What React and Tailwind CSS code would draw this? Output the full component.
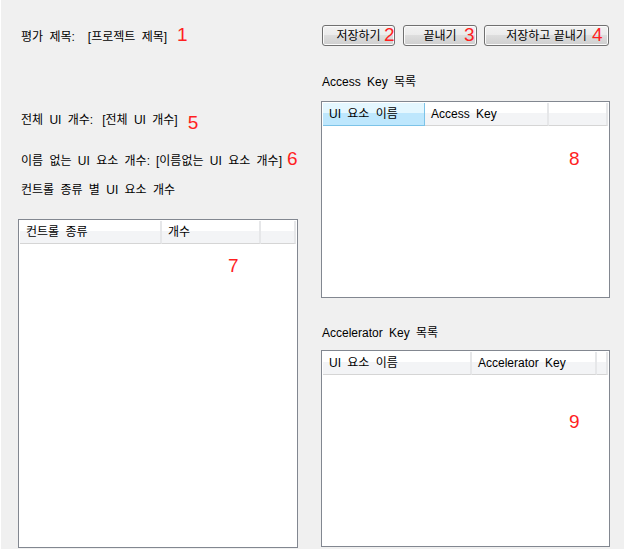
import React from "react"

const digit = "font-['Liberation_Sans',Arial,sans-serif] text-[19px] leading-none text-[#ff1f1f]"

const headCell =
  "flex h-[23px] items-center border-r-2 border-b border-r-[#e6e7e9] border-b-[#d5d5d5] bg-[linear-gradient(#ffffff_0%,#ffffff_45%,#f3f4f6_45%,#f3f4f6_100%)] pl-[6px]"
const hotCell =
  "flex h-[23px] items-center border-r border-b border-[#7cc3e8] bg-[linear-gradient(#e4f7ff_0%,#e4f7ff_45%,#bee7fd_45%,#bee7fd_100%)] pl-[6px]"

function ListBox({ className, columns, hot, mark, markPos }) {
  return (
    <div className={`relative border border-[#828790] bg-white p-px ${className}`}>
      <div className="flex">
        {columns.map((c, i) => (
          <div key={i} className={`${i === hot ? hotCell : headCell} ${c.w}`}>
            {c.label}
          </div>
        ))}
      </div>
      <span className={`absolute ${digit} ${markPos}`}>{mark}</span>
    </div>
  )
}

function Button({ label, mark, className, markPos }) {
  return (
    <button
      type="button"
      className={`relative flex h-[21px] items-center justify-center rounded-[3px] border border-[#707070] bg-[linear-gradient(#f2f2f2_0%,#ebebeb_50%,#dddddd_50%,#cfcfcf_100%)] shadow-[inset_0_0_0_1px_#fbfbfb] ${className}`}
    >
      {label}
      <span className={`absolute ${digit} ${markPos}`}>{mark}</span>
    </button>
  )
}

export default function App() {
  return (
    <div className="flex h-[549px] w-[624px] border-l border-white bg-[#f0f0f0] font-['Liberation_Sans','Noto_Sans_CJK_KR',sans-serif] text-[12px] leading-[16px] text-black [word-spacing:3px]">
      {/* left column */}
      <div className="flex w-[298px] flex-col pl-[17px]">
        <div className="mt-[25px] flex h-[16px] items-baseline pl-[3px]">
          <span>평가 제목:</span>
          <span className="ml-[13px]">[프로젝트 제목]</span>
          <span className={`${digit} ml-[10px]`}>1</span>
        </div>
        <div className="mt-[67px] flex h-[16px] items-baseline pl-[3px]">
          <span>전체 UI 개수:</span>
          <span className="ml-[9px]">[전체 UI 개수]</span>
          <span className={`${digit} relative top-[5px] ml-[10px]`}>5</span>
        </div>
        <div className="mt-[25px] flex h-[16px] items-baseline pl-[3px]">
          <span>이름 없는 UI 요소 개수:</span>
          <span className="ml-[6px]">[이름없는 UI 요소 개수]</span>
          <span className={`${digit} ml-[5px]`}>6</span>
        </div>
        <div className="mt-[17px] h-[16px] pl-[3px]">컨트롤 종류 별 UI 요소 개수</div>
        <ListBox
          className="mt-[21px] h-[329px] w-[280px]"
          columns={[
            { label: "컨트롤 종류", w: "w-[142px]" },
            { label: "개수", w: "w-[99px]" },
            { label: "", w: "flex-1" },
          ]}
          mark="7"
          markPos="left-[209px] top-[36px]"
        />
      </div>

      {/* right column */}
      <div className="ml-[22px] flex w-[289px] flex-col">
        <div className="mt-[25px] flex">
          <Button label="저장하기" mark="2" className="ml-px w-[73px]" markPos="left-[61px] -top-px" />
          <Button label="끝내기" mark="3" className="ml-[8px] w-[74px]" markPos="left-[60px] -top-px" />
          <Button label="저장하고 끝내기" mark="4" className="ml-[7px] w-[125px]" markPos="left-[107px] -top-px" />
        </div>
        <div className="mt-[28px] h-[16px] pl-px">Access Key 목록</div>
        <ListBox
          className="mt-[11px] h-[197px] w-[289px]"
          hot={0}
          columns={[
            { label: "UI 요소 이름", w: "w-[102px]" },
            { label: "Access Key", w: "w-[124px]" },
            { label: "", w: "flex-1" },
          ]}
          mark="8"
          markPos="left-[247px] top-[47px]"
        />
        <div className="mt-[27px] h-[16px] pl-px">Accelerator Key 목록</div>
        <ListBox
          className="mt-[9px] h-[197px] w-[289px]"
          columns={[
            { label: "UI 요소 이름", w: "w-[149px]" },
            { label: "Accelerator Key", w: "w-[125px]" },
            { label: "", w: "flex-1" },
          ]}
          mark="9"
          markPos="left-[247px] top-[61px]"
        />
      </div>
    </div>
  )
}
